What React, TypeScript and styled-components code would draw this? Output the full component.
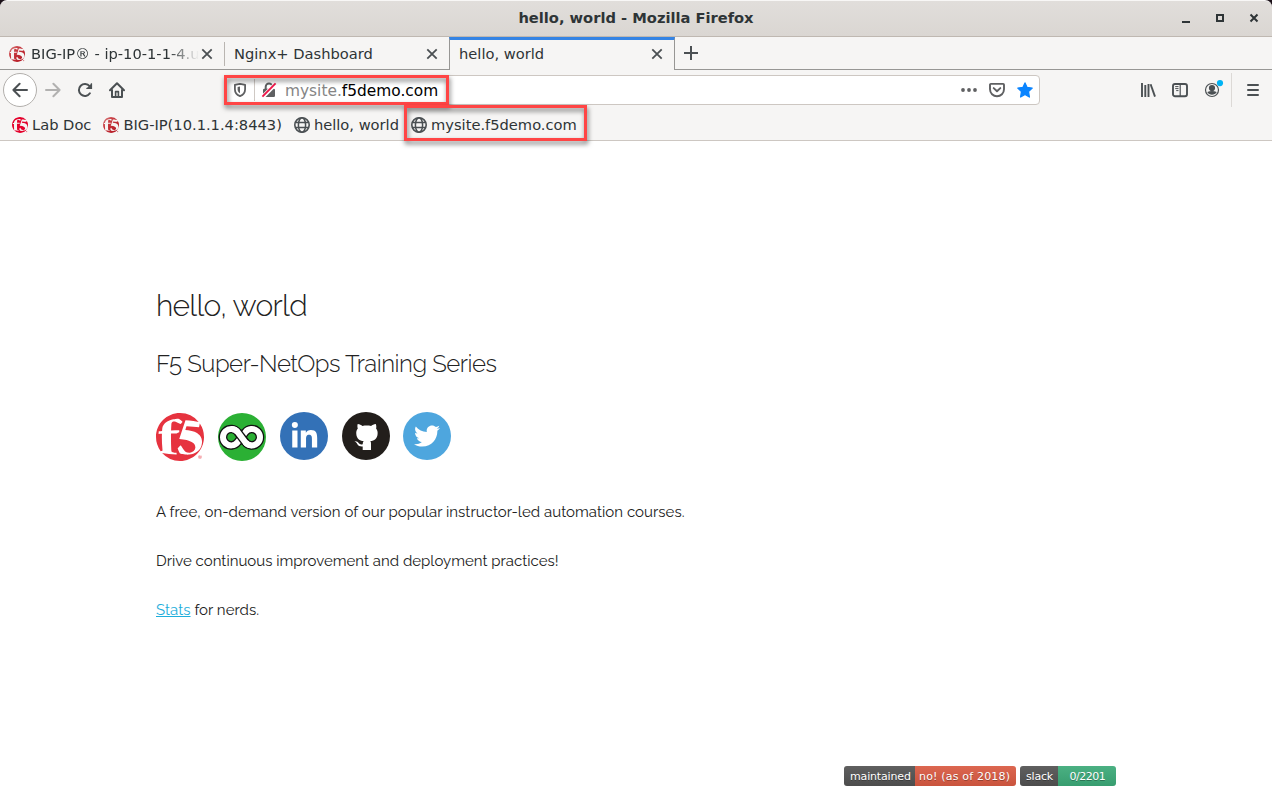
import React from 'react';
import styled, { createGlobalStyle } from 'styled-components';
import { SiF5 } from 'react-icons/si';
import { FaLinkedinIn, FaTwitter } from 'react-icons/fa';

const GlobalStyle = createGlobalStyle`
  * { box-sizing: border-box; }
  html, body { margin: 0; background: #fff; overflow: hidden; }
  svg { display: block; flex: none; }
`;

const Window = styled.div`
  position: relative;
  width: 1272px;
  height: 801px;
  display: flex;
  flex-direction: column;
  background: #1b1018;
  overflow: hidden;
  font-family: 'DejaVu Sans', sans-serif;
  font-size: 14.667px;
  color: #2e3436;
  white-space: nowrap;
`;

const TitleBar = styled.header`
  height: 37px;
  flex: none;
  display: grid;
  grid-template-columns: 1fr auto 1fr;
  align-items: center;
  background: linear-gradient(#e1dedb, #dad6d2);
  border-top: 1px solid #f8f7f6;
  border-bottom: 1px solid #bfb8b1;
  border-radius: 7px 7px 0 0;
`;

const WindowTitle = styled.h1`
  grid-column: 2;
  margin: 0 0 2px;
  font-size: 14.667px;
  line-height: 18px;
  font-weight: bold;
`;

const WindowButtons = styled.div`
  display: flex;
  justify-content: flex-end;
  gap: 22px;
  padding: 0 12px 1px 0;
`;

const TabStrip = styled.nav`
  height: 33px;
  flex: none;
  display: flex;
  background: #f6f5f4;
`;

const Tab = styled.div<{ $width: number; $active?: boolean; $divider?: boolean }>`
  width: ${p => p.$width}px;
  display: flex;
  align-items: center;
  padding: ${p => (p.$active ? '0 11px 2px 9px' : p.$divider ? '1px 12px 0 9px' : '1px 11px 0 9px')};
  border-top: ${p => (p.$active ? '3px solid #3584e4' : '0')};
  border-bottom: ${p => (p.$active ? '0' : '1px solid #979694')};
  border-left: ${p => (p.$active ? '1px solid #979694' : '0')};
  border-right: ${p => (p.$active ? '1px solid #979694' : '0')};
  background: ${p =>
    p.$divider
      ? 'linear-gradient(#b9b5b1, #b9b5b1) right 5px / 1px 24px no-repeat #f6f5f4'
      : '#f6f5f4'};
`;

const TabLabel = styled.span<{ $fade?: boolean }>`
  flex: 1;
  overflow: hidden;
  line-height: 20px;
  margin-left: ${p => (p.$fade ? 6 : 0)}px;
  mask-image: ${p => (p.$fade ? 'linear-gradient(90deg, #000 138px, transparent 168px)' : 'none')};
`;

const NewTab = styled.div`
  flex: 1;
  padding: 9px 8px 0;
  border-bottom: 1px solid #979694;
`;

const Toolbar = styled.div`
  height: 40px;
  flex: none;
  display: flex;
  align-items: center;
  background: #f6f5f4;
`;

const BackButton = styled.div`
  width: 34px;
  height: 34px;
  margin: 0 8px 0 3px;
  border: 1px solid #b2afac;
  border-radius: 50%;
  background: #fff;
  display: grid;
  place-items: center;
`;

const NavIcons = styled.div`
  display: flex;
  width: 179px;
  gap: 16px;
`;

const AddressBar = styled.div`
  width: 816px;
  height: 30px;
  display: flex;
  align-items: center;
  padding: 0 6px 0 7px;
  border: 1px solid #cdc7c2;
  border-radius: 4px;
  background: #fff;
`;

const AddressDivider = styled.i`
  width: 1px;
  height: 22px;
  margin: 0 6px;
  background: #cfc9c4;
`;

const Address = styled.span`
  flex: 1;
  margin-left: 8px;
  padding-top: 1px;
  line-height: 20px;
  color: #858585;
  font-size: 15.4px;
  b { font-weight: normal; color: #000; }
`;

const AddressActions = styled.div`
  display: flex;
  gap: 12px;
`;

const ToolIcons = styled.div`
  display: flex;
  align-items: center;
  gap: 16px;
  margin-left: 100px;
`;

const MenuArea = styled.div`
  height: 34px;
  display: flex;
  align-items: center;
  padding-left: 13px;
  margin-left: 7px;
  border-left: 1px solid #dcd9d6;
`;

const BookmarkBar = styled.div`
  height: 31px;
  flex: none;
  display: flex;
  padding: 0 12px;
  gap: 12px;
  background: #f6f5f4;
  border-bottom: 1px solid #cdc7c2;
`;

const Bookmark = styled.div`
  display: flex;
  align-items: center;
  gap: 4px;
  line-height: 20px;
`;

const Page = styled.main`
  flex: 1;
  display: flex;
  flex-direction: column;
  padding: 146px 156px 15px;
  background: #fff;
  color: #222;
  font-family: Raleway, Lato, sans-serif;
`;

const Heading = styled.h2`
  margin: 0 0 21px;
  height: 38px;
  font-size: 30px;
  line-height: 38px;
  font-weight: 300;
  letter-spacing: -0.7px;
`;

const Subheading = styled.h3`
  margin: 0 0 31px;
  height: 35px;
  font-size: 24px;
  line-height: 35px;
  font-weight: 300;
  letter-spacing: -0.49px;
`;

const SocialRow = styled.div`
  height: 50px;
  display: flex;
  gap: 14px;
  margin-bottom: 38px;
`;

const Paragraph = styled.p<{ $spacing?: number }>`
  margin: 0 0 25px;
  height: 24px;
  line-height: 24px;
  font-size: 15px;
  letter-spacing: ${p => p.$spacing ?? 0}px;
`;

const StatsLink = styled.a`
  color: #1eaedb;
  text-decoration: underline;
`;

const Disc = styled.div<{ $color: string; $drop?: number }>`
  width: 48px;
  height: 48px;
  margin-top: ${p => p.$drop ?? 0}px;
  border-radius: 50%;
  display: grid;
  place-items: center;
  background: ${p => p.$color};
  color: #fff;
  &:last-child { margin-left: -1px; }
`;

const Badges = styled.footer`
  margin-top: auto;
  display: flex;
  gap: 4px;
  justify-content: flex-end;
  font: 11px/21px 'DejaVu Sans', sans-serif;
  color: #fff;
`;

const Badge = styled.div`
  height: 20px;
  display: flex;
  border-radius: 3px;
  overflow: hidden;
  text-shadow: 0 1px 0 rgba(1, 1, 1, 0.3);
`;

const BadgePart = styled.span<{ $width: number; $inset: number; $spacing: number; $color: string }>`
  width: ${p => p.$width}px;
  padding-left: ${p => p.$inset}px;
  letter-spacing: ${p => p.$spacing}px;
  background: linear-gradient(rgba(187, 187, 187, 0.1), rgba(0, 0, 0, 0.1)) ${p => p.$color};
`;

const Highlight = styled.div<{ $x: number; $y: number; $w: number; $h: number }>`
  position: absolute;
  left: ${p => p.$x}px;
  top: ${p => p.$y}px;
  width: ${p => p.$w}px;
  height: ${p => p.$h}px;
  border: 3px solid #ff4545;
  filter: drop-shadow(1px 3px 2.5px rgba(0, 0, 0, 0.55));
`;

const GlossyF5 = styled(SiF5)`
  fill: url(#gloss);
`;

const ink = '#4b5053';

const GlossDefs = () => (
  <svg width="0" height="0">
    <defs>
      <linearGradient id="gloss" x1="0" y1="0" x2="1" y2="1">
        <stop offset="0" stopColor="#dc8f8f" />
        <stop offset="0.35" stopColor="#c73a40" />
        <stop offset="1" stopColor="#b0101c" />
      </linearGradient>
    </defs>
  </svg>
);

const F5Mark = ({ glossy = false }: { glossy?: boolean }) =>
  glossy ? <GlossyF5 size={16} /> : <SiF5 size={16} color="#e4002b" />;

const Close = () => (
  <svg width="12" height="12" viewBox="0 0 12 12" stroke={ink} strokeWidth="1.8">
    <path d="M1.3 1.3l9.4 9.4M10.7 1.3L1.3 10.7" />
  </svg>
);

const Globe = () => (
  <svg width="16" height="16" viewBox="0 0 16 16" fill="none" stroke={ink} strokeWidth="1.5">
    <circle cx="8" cy="8" r="7.2" strokeWidth="1.6" />
    <ellipse cx="8" cy="8" rx="3.6" ry="7.2" />
    <path d="M1 5.5h14M1 10.5h14" />
  </svg>
);

const Back = () => (
  <svg width="16" height="16" viewBox="0 0 16 16" fill="none" stroke={ink} strokeWidth="2" strokeLinecap="round" strokeLinejoin="round">
    <path d="M15 8H1.4M7.6 1.8L1.4 8l6.2 6.2" />
  </svg>
);

const Forward = () => (
  <svg width="16" height="16" viewBox="0 0 16 16" fill="none" stroke="#b2b1b0" strokeWidth="2" strokeLinecap="round" strokeLinejoin="round">
    <path d="M1 8h13.6M8.4 1.8L14.6 8l-6.2 6.2" />
  </svg>
);

const Reload = () => (
  <svg width="16" height="16" viewBox="0 0 16 16" fill="none" stroke={ink} strokeWidth="2">
    <path d="M12.9 11.3A6 6 0 1 1 12.6 4.2" strokeLinecap="round" />
    <path d="M15 1v6H9z" fill={ink} stroke="none" />
    <path d="M14.4 1.6V6.4H9.6" strokeWidth="1.4" />
  </svg>
);

const Home = () => (
  <svg width="16" height="16" viewBox="0 0 16 16" fill="none" stroke={ink} strokeWidth="2" strokeLinejoin="round" strokeLinecap="round">
    <path d="M1 8.2L8 1.2l7 7" />
    <path d="M3 8v6.9h10V8" />
    <path d="M6.6 14V9.6h2.8V14" strokeWidth="1.6" />
  </svg>
);

const Shield = () => (
  <svg width="16" height="16" viewBox="0 0 16 16" fill="none" stroke="#5f6062" strokeWidth="1.8">
    <path d="M8 1.9c1.8.2 3.5.5 5.1 1v4.3c0 3.2-2.1 5.7-5.1 6.9-3-1.2-5.1-3.7-5.1-6.9V2.9c1.6-.5 3.3-.8 5.1-1z" strokeLinejoin="round" />
    <path d="M8 4.6v6.7c-1.7-.9-2.4-2.4-2.4-4V5z" fill="#5f6062" stroke="none" />
  </svg>
);

const InsecureLock = () => (
  <svg width="16" height="16" viewBox="0 0 16 16" fill="none">
    <path d="M4.7 7V4.8a3.3 3.3 0 0 1 6.6 0V7" stroke="#5f6062" strokeWidth="2" />
    <rect x="2" y="6.8" width="12" height="8.2" rx="1.2" fill="#5f6062" />
    <path d="M.8 15.8L15.2 1.4" stroke="#fff" strokeWidth="4.2" />
    <path d="M1.4 14.6L14.6 1.4" stroke="#ef1447" strokeWidth="1.9" />
  </svg>
);

const Dots = () => (
  <svg width="16" height="16" viewBox="0 0 16 16" fill="#5f6062">
    <circle cx="2" cy="8" r="1.9" /><circle cx="8" cy="8" r="1.9" /><circle cx="14" cy="8" r="1.9" />
  </svg>
);

const Pocket = () => (
  <svg width="16" height="16" viewBox="0 0 16 16" fill="none" stroke="#5f6062" strokeWidth="1.9" strokeLinecap="round" strokeLinejoin="round">
    <path d="M1.9 1.9h12.2c.5 0 .9.3.9.9v4.5a7 7 0 0 1-14 0V2.8c0-.6.4-.9.9-.9z" />
    <path d="M4.7 6.1L8 9.3l3.3-3.2" />
  </svg>
);

const Star = () => (
  <svg width="16" height="16" viewBox="0 0 16 16" fill="#0a84ff" stroke="#0a84ff" strokeWidth="1.3" strokeLinejoin="round">
    <path d="M8 .9l2.1 4.5 5.1.7-3.7 3.5.9 5.4L8 12.5 3.6 15l.9-5.4L.8 6.1l5.1-.7z" />
  </svg>
);

const Library = () => (
  <svg width="16" height="16" viewBox="0 0 16 16" fill="none" stroke={ink} strokeWidth="1.9">
    <path d="M2 1v14M5.3 3v12M8.5 2v13" />
    <path d="M10.6 2.2l4.4 12.4" />
  </svg>
);

const Sidebar = () => (
  <svg width="16" height="16" viewBox="0 0 16 16" fill="none" stroke={ink} strokeWidth="1.9">
    <rect x="1" y="2" width="14" height="12.2" rx="2" />
    <path d="M8.2 2v12" strokeWidth="1.2" />
    <path d="M3.2 4.6H6.5M3.2 6.6H6.5M4.2 8.6H6.5" strokeWidth="1" />
  </svg>
);

const Account = () => (
  <svg width="20" height="20" viewBox="0 0 20 20" fill="none">
    <circle cx="8" cy="10" r="6.5" stroke={ink} strokeWidth="1.2" />
    <circle cx="8" cy="8" r="3.1" fill={ink} />
    <path d="M3.3 11.9c2.9-1.2 6.5-1.2 9.4 0-1.7 3.7-7.7 3.7-9.4 0z" fill={ink} />
    <circle cx="16" cy="3.1" r="3.1" fill="#00b3f4" />
  </svg>
);

const Menu = () => (
  <svg width="16" height="16" viewBox="0 0 16 16" stroke={ink} strokeWidth="2" strokeLinecap="round">
    <path d="M3 3h10M3 8h10M3 13h10" />
  </svg>
);

const loop =
  'M19.7 19.2A8.2 8.2 0 1 0 19.7 29.2L27.3 19.2A8.2 8.2 0 1 1 27.3 29.2z';

const InfinityMark = () => (
  <svg width="48" height="48" viewBox="0 0 48 48" fill="none">
    <path d={loop} stroke="#111" strokeWidth="8.6" />
    <path d={loop} stroke="#fff" strokeWidth="6" />
    <path d="M19.7 19.2L27.3 29.2" stroke="#111" strokeWidth="8.6" />
    <path d="M13.2 16A8.2 8.2 0 0 1 19.7 19.2L27.3 29.2A8.2 8.2 0 0 0 33.8 32.4" stroke="#fff" strokeWidth="6" />
  </svg>
);

const GithubCat = () => (
  <svg width="48" height="48" viewBox="0 0 48 48" fill="#fff">
    <path d="M15.7 11.9c1.900.1 3.600 1.100 4.700 2 2.700-.6 6-.6 8.700 0 1.100-.9 2.800-1.900 4.700-2 .6 1.600.7 3.100.3 4.500 1.300 1.500 1.700 3.300 1.500 5.500-.4 4.700-3.300 6.600-7.200 7.200.5.8.6 1.500.6 2.500V38h-8.300v-3.600c-2.600.2-4.300-.5-5.300-2.200-.7-1.200-1.400-2.200-3-2.900 2.200-.5 3.300.4 4.200 1.700.9 1.300 2.300 1.700 4.100 1.200 0-1.200.3-2.200.9-3.100-4-.6-6.900-2.500-7.300-7.200-.2-2.200.2-4 1.500-5.500-.4-1.400-.6-2.900-.1-4.500z" />
  </svg>
);

const App = () => (
  <Window>
    <GlobalStyle />
    <TitleBar>
      <WindowTitle>hello, world - Mozilla Firefox</WindowTitle>
      <WindowButtons>
        <svg width="12" height="12" viewBox="0 0 12 12"><path d="M2 9h8v2H2z" fill="#2e3436" /></svg>
        <svg width="12" height="12" viewBox="0 0 12 12"><path d="M3 3h6v6H3z" fill="none" stroke="#2e3436" strokeWidth="2" /></svg>
        <svg width="12" height="12" viewBox="0 0 12 12"><path d="M2.5 2.5l7 7M9.5 2.5l-7 7" stroke="#2e3436" strokeWidth="2" /></svg>
      </WindowButtons>
    </TitleBar>
    <TabStrip>
      <Tab $width={225} $divider>
        <F5Mark glossy />
        <TabLabel $fade>BIG-IP® - ip-10-1-1-4.u</TabLabel>
        <Close />
      </Tab>
      <Tab $width={224}>
        <TabLabel>Nginx+ Dashboard</TabLabel>
        <Close />
      </Tab>
      <Tab $width={226} $active>
        <TabLabel>hello, world</TabLabel>
        <Close />
      </Tab>
      <NewTab>
        <svg width="15" height="15" viewBox="0 0 15 15" stroke={ink} strokeWidth="2"><path d="M8 0v14M1 7h14" /></svg>
      </NewTab>
    </TabStrip>
    <Toolbar>
      <BackButton><Back /></BackButton>
      <NavIcons>
        <Forward />
        <Reload />
        <Home />
      </NavIcons>
      <AddressBar>
        <Shield />
        <AddressDivider />
        <InsecureLock />
        <Address>mysite.<b>f5demo.com</b></Address>
        <AddressActions>
          <Dots />
          <Pocket />
          <Star />
        </AddressActions>
      </AddressBar>
      <ToolIcons>
        <Library />
        <Sidebar />
        <Account />
      </ToolIcons>
      <MenuArea><Menu /></MenuArea>
    </Toolbar>
    <BookmarkBar>
      <Bookmark><F5Mark />Lab Doc</Bookmark>
      <Bookmark><F5Mark glossy />BIG-IP(10.1.1.4:8443)</Bookmark>
      <Bookmark><Globe />hello, world</Bookmark>
      <Bookmark><Globe />mysite.f5demo.com</Bookmark>
    </BookmarkBar>
    <Page>
      <Heading>hello, world</Heading>
      <Subheading>F5 Super-NetOps Training Series</Subheading>
      <SocialRow>
        <Disc $color="#fff" $drop={1}><SiF5 size={48} color="#e6333f" /></Disc>
        <Disc $color="#2bb034" $drop={1}><InfinityMark /></Disc>
        <Disc $color="#3371b7"><FaLinkedinIn size={29} /></Disc>
        <Disc $color="#221e1b"><GithubCat /></Disc>
        <Disc $color="#4ea6de"><FaTwitter size={26} /></Disc>
      </SocialRow>
      <Paragraph $spacing={0.028}>A free, on-demand version of our popular instructor-led automation courses.</Paragraph>
      <Paragraph>Drive continuous improvement and deployment practices!</Paragraph>
      <Paragraph $spacing={0.028}><StatsLink>Stats</StatsLink> for nerds.</Paragraph>
      <Badges>
        <Badge>
          <BadgePart $width={71} $inset={6} $spacing={-0.16} $color="#555">maintained</BadgePart>
          <BadgePart $width={101} $inset={4} $spacing={0.18} $color="#e05d44">no! (as of 2018)</BadgePart>
        </Badge>
        <Badge>
          <BadgePart $width={38} $inset={6} $spacing={-0.2} $color="#555">slack</BadgePart>
          <BadgePart $width={58} $inset={11.5} $spacing={-0.5} $color="#3eaf7c">0/2201</BadgePart>
        </Badge>
      </Badges>
    </Page>
    <Highlight $x={224} $y={75} $w={225} $h={30} />
    <Highlight $x={404} $y={105} $w={183} $h={36} />
    <GlossDefs />
  </Window>
);

export default App;
